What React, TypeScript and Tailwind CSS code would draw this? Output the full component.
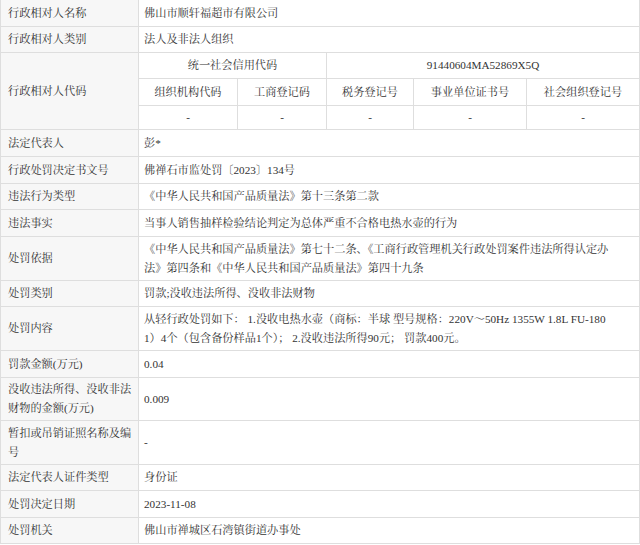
import React from "react";

const FONT = {
  fontFamily:
    '"Liberation Serif", "Noto Serif CJK SC", "Noto Sans CJK SC", serif',
};

type Row = { label: React.ReactNode; value: React.ReactNode; h: string };

const Label = ({ children, h }: { children: React.ReactNode; h: string }) => (
  <div
    className={`w-[138px] shrink-0 flex items-center pl-[7px] pr-1 bg-[#f7f7f7] border-r border-[#dedede] leading-[19px] ${h}`}
  >
    <div>{children}</div>
  </div>
);

export default function App() {
  const top: Row[] = [
    { label: "行政相对人名称", value: "佛山市顺轩福超市有限公司", h: "h-[27px]" },
    { label: "行政相对人类别", value: "法人及非法人组织", h: "h-[26px]" },
  ];
  const rest: Row[] = [
    { label: "法定代表人", value: "彭*", h: "h-[27px]" },
    { label: "行政处罚决定书文号", value: "佛禅石市监处罚〔2023〕134号", h: "h-[27px]" },
    { label: "违法行为类型", value: "《中华人民共和国产品质量法》第十三条第二款", h: "h-[26px]" },
    { label: "违法事实", value: "当事人销售抽样检验结论判定为总体严重不合格电热水壶的行为", h: "h-[27px]" },
    {
      label: "处罚依据",
      value: (
        <>
          《中华人民共和国产品质量法》第七十二条、《工商行政管理机关行政处罚案件违法所得认定办
          <br />
          法》第四条和《中华人民共和国产品质量法》第四十九条
        </>
      ),
      h: "h-[44px]",
    },
    { label: "处罚类别", value: "罚款;没收违法所得、没收非法财物", h: "h-[26px]" },
    {
      label: "处罚内容",
      value: (
        <>
          从轻行政处罚如下： 1.没收电热水壶（商标：半球 型号规格：220V～50Hz 1355W 1.8L FU-180
          <br />
          1）4个（包含备份样品1个）； 2.没收违法所得90元； 罚款400元。
        </>
      ),
      h: "h-[44px]",
    },
    { label: "罚款金额(万元)", value: "0.04", h: "h-[27px]" },
    {
      label: (
        <>
          没收违法所得、没收非法
          <br />
          财物的金额(万元)
        </>
      ),
      value: "0.009",
      h: "h-[43px]",
    },
    {
      label: (
        <>
          暂扣或吊销证照名称及编
          <br />号
        </>
      ),
      value: "-",
      h: "h-[44px]",
    },
    { label: "法定代表人证件类型", value: "身份证", h: "h-[26px]" },
    { label: "处罚决定日期", value: "2023-11-08", h: "h-[27px]" },
    { label: "处罚机关", value: "佛山市禅城区石湾镇街道办事处", h: "h-[26px]" },
  ];

  const renderRow = (r: Row, i: number) => (
    <div key={i} className={`flex border-b border-[#dedede] ${r.h}`}>
      <Label h="h-full">{r.label}</Label>
      <div className="flex-1 flex items-center pl-[5px] leading-[19px] whitespace-nowrap">
        <div>{r.value}</div>
      </div>
    </div>
  );

  const sub = "flex items-center justify-center border-r border-[#dedede]";

  return (
    <div
      className="w-[640px] h-[545px] bg-white text-[#333] text-[11.2px] overflow-hidden"
      style={FONT}
    >
      <div className="border-l border-r border-[#dedede]">
        {top.map(renderRow)}
        <div className="flex border-b border-[#dedede] h-[77px]">
          <Label h="h-full">行政相对人代码</Label>
          <div className="flex-1 grid grid-cols-[99px_89px_87px_113px_1fr] grid-rows-[26px_27px_1fr]">
            <div className={`col-span-2 border-b border-[#dedede] ${sub}`}>统一社会信用代码</div>
            <div className="col-span-3 border-b border-[#dedede] flex items-center justify-center">
              91440604MA52869X5Q
            </div>
            <div className={`border-b border-[#dedede] ${sub}`}>组织机构代码</div>
            <div className={`border-b border-[#dedede] ${sub}`}>工商登记码</div>
            <div className={`border-b border-[#dedede] ${sub}`}>税务登记号</div>
            <div className={`border-b border-[#dedede] ${sub}`}>事业单位证书号</div>
            <div className="border-b border-[#dedede] flex items-center justify-center">社会组织登记号</div>
            <div className={sub}>-</div>
            <div className={sub}>-</div>
            <div className={sub}>-</div>
            <div className={sub}>-</div>
            <div className="flex items-center justify-center">-</div>
          </div>
        </div>
        {rest.map(renderRow)}
      </div>
    </div>
  );
}
